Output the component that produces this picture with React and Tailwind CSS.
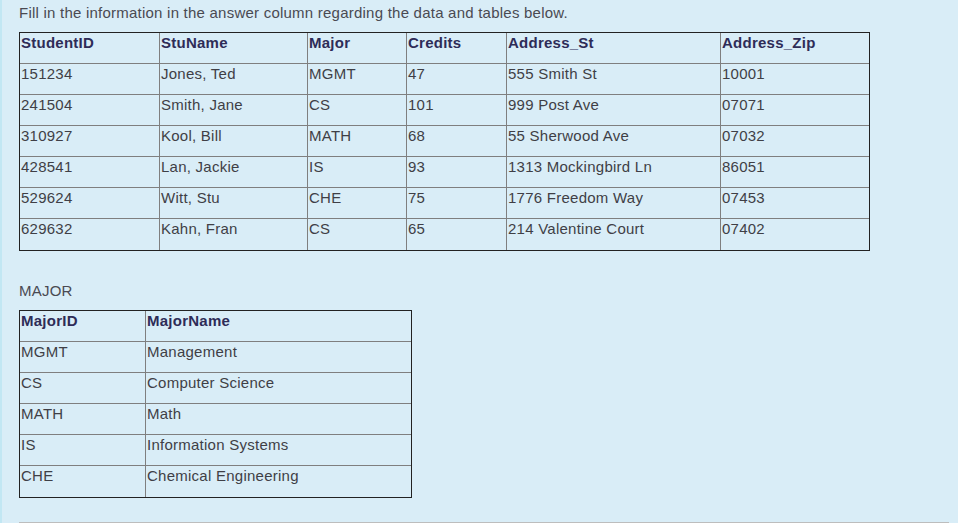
import React from "react";

const students = [
  ["151234", "Jones, Ted", "MGMT", "47", "555 Smith St", "10001"],
  ["241504", "Smith, Jane", "CS", "101", "999 Post Ave", "07071"],
  ["310927", "Kool, Bill", "MATH", "68", "55 Sherwood Ave", "07032"],
  ["428541", "Lan, Jackie", "IS", "93", "1313 Mockingbird Ln", "86051"],
  ["529624", "Witt, Stu", "CHE", "75", "1776 Freedom Way", "07453"],
  ["629632", "Kahn, Fran", "CS", "65", "214 Valentine Court", "07402"],
];

const majors = [
  ["MGMT", "Management"],
  ["CS", "Computer Science"],
  ["MATH", "Math"],
  ["IS", "Information Systems"],
  ["CHE", "Chemical Engineering"],
];

// grid-based table: outer dark border on the wrapper, grey lines between cells
const DataTable = ({ cols, head, rows }) => {
  const all = [head, ...rows];
  return (
    <div className="border border-[#222] inline-block">
      {all.map((row, ri) => (
        <div
          key={ri}
          className="grid"
          style={{ gridTemplateColumns: cols.map((c) => c + "px").join(" ") }}
        >
          {row.map((cell, ci) => (
            <div
              key={ci}
              className={
                "h-[31px] pl-px pt-[1px] leading-[18px] text-[15px] tracking-[0.25px] whitespace-nowrap overflow-hidden border-[#7f7f7f] " +
                (ci < row.length - 1 ? "border-r " : "") +
                (ri < all.length - 1 ? "border-b " : "h-[30px] ") +
                (ri === 0 ? "font-bold text-[#2e2c57]" : "text-[#3f3f46]")
              }
            >
              {cell}
            </div>
          ))}
        </div>
      ))}
    </div>
  );
};

const App = () => {
  return (
    <div
      className="w-[958px] h-[523px] overflow-hidden bg-[#d9edf7] border-l-2 border-[#c2e7f3] pl-[17px] pt-[3px]"
      style={{ fontFamily: '"Liberation Sans", Arial, sans-serif' }}
    >
      <p className="text-[15px] tracking-[0.23px] leading-5 text-[#4a4a52]">
        Fill in the information in the answer column regarding the data and tables below.
      </p>

      <div className="mt-[9px]">
        <DataTable
          cols={[140, 148, 99, 100, 214, 148]}
          head={["StudentID", "StuName", "Major", "Credits", "Address_St", "Address_Zip"]}
          rows={students}
        />
      </div>

      <p className="mt-[30px] text-[15px] tracking-[0.23px] leading-5 text-[#4a4a52]">MAJOR</p>

      <div className="mt-[9px]">
        <DataTable cols={[126, 265]} head={["MajorID", "MajorName"]} rows={majors} />
      </div>

      <div className="mt-[24px] w-[930px] h-[40px] border border-[#bdbdbd] bg-[#f5f5f5]" />
    </div>
  );
};

export default App;
